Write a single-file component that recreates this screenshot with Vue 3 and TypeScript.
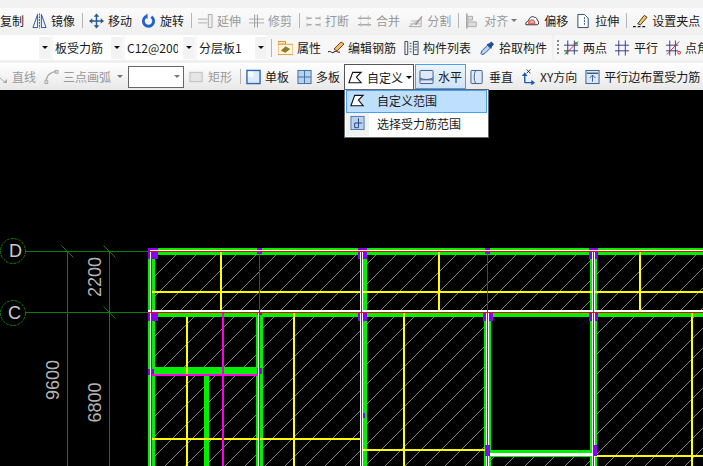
<script setup lang="ts">
interface Tool { kind?: 'sep' | 'arrow' | 'grip'; t?: string; icon?: string; w?: number; ml?: number; off?: boolean }

const icons: Record<string, string> = {
  mirror: '<path d="M1 15 6 1v14zM15 15 10 1v14z" fill="#eef3fb" stroke="#2a4f9a"/><path d="M8 0v16" stroke="#2a4f9a" stroke-dasharray="2 1"/>',
  move: '<path d="M8 1v14M1 8h14" stroke="#2b5a8c" stroke-width="1.6"/><path d="M8 0 5 3.500h6zM8 16l-3-3.500h6zM0 8l3.500-3v6zM16 8l-3.500-3v6z" fill="#2b5a8c"/>',
  rotate: '<path d="M5 3.500A5.500 5.500 0 1 0 11 3.500" fill="none" stroke="#2460c8" stroke-width="3"/><path d="M7 0v6L3.500 3z" fill="#2460c8"/>',
  extend: '<path d="M0 6h10M0 10h10" stroke="#aaa"/><path d="M11 1h4v14h-4z" fill="#eee" stroke="#aaa"/>',
  trim: '<path d="M0 6h16M0 10h16" stroke="#aaa"/><path d="M6 1v14M9 1v14" stroke="#999"/>',
  break: '<path d="M1 5h5M10 5h5M1 12h5M10 12h5" stroke="#aaa" stroke-width="1.500"/><path d="M1 3v4M15 3v4M1 10v4M15 10v4" stroke="#bbb"/>',
  merge: '<path d="M1 5h14M1 12h14" stroke="#aaa" stroke-width="1.500"/><path d="M4 2v5M12 2v5M4 9v5M12 9v5" stroke="#bbb"/>',
  split: '<path d="M1 14h13V5z" fill="#eee" stroke="#aaa"/><path d="M3 8h8M2 11h11" stroke="#bbb"/><path d="M8 12 15 3" stroke="#999" stroke-width="1.500"/>',
  align: '<path d="M2 0v16" stroke="#999" stroke-width="1.500"/><path d="M3 3h5v4H3zM3 9h9v5H3z" fill="#ddd" stroke="#aaa"/>',
  offset: '<path d="M1 12c-1-3 2-4 3-4 0-3 3-6 6-4 2 0 3 2 3 3 2 1 2 5 0 5z" fill="#fff" stroke="#223"/><path d="M4 11c-1-1 0-2 1-2 0-2 2-3 3-2 2 0 2 1 2 2 1 0 1 2 0 2z" fill="#f3a9a0" stroke="#d33"/>',
  stretch: '<path d="M2 1h7l4 4v10H2z" fill="#fff" stroke="#23457a"/><path d="M9 4v9" stroke="#23457a" stroke-dasharray="2 1"/>',
  grips: '<path d="M0 14h3M5 14h3M10 14h3" stroke="#111" stroke-width="1.500"/><path d="M5 11 12 2l3 2-7 8z" fill="#f5c862" stroke="#333"/>',
  attr: '<path d="M0 1h8v3H0z" fill="#fbe6b8" stroke="#c98a3a"/><path d="M0 4h16v11H0z" fill="#fff6df" stroke="#e69a35"/><path d="M3 11 8 6l5 3-5 4z" fill="#8c7a2e"/>',
  edit: '<path d="M0 12c3-2 3 2 6 0s3 1 6 0" fill="none" stroke="#111"/><path d="M6 9 13 2l3 2-7 7z" fill="#e9c36a" stroke="#8a3a1a"/>',
  list: '<path d="M1 1h3v14H1zM10 1h5v14h-5z" fill="#eef4fb" stroke="#345"/><path d="M6 3h2M6 6h2M6 9h2M6 12h2M11 4h3M11 7h3M11 10h3" stroke="#345"/>',
  pick: '<path d="M2 15l-1-1 1-3 6-6 3 3-6 6z" fill="#b9d6f5" stroke="#1e4f9e"/><path d="M7 4l5 5 1-3 2-2-3-3-2 2z" fill="#1e4f9e"/>',
  twopt: '<path d="M0 5h15M0 11h15M4 0v15M11 0v15" stroke="#2e3a88"/><path d="M1 15 15 1" stroke="#d62020"/><circle cx="3" cy="13" r="1.500" fill="#2d9a2d"/><circle cx="13" cy="3" r="1.500" fill="#2d9a2d"/>',
  parallel: '<path d="M0 5h15M0 11h15M4 0v16M11 0v16" stroke="#2e3a88"/>',
  angle: '<path d="M0 5h13M0 11h13M4 0v16M10 0v16" stroke="#2e3a88"/><path d="M1 15 14 1" stroke="#d62020"/><circle cx="14" cy="13" r="1.500" fill="none" stroke="#d62020"/>',
  line: '<path d="M-6 4 6 14" stroke="#aaa"/><path d="M3 14h4v-4z" fill="#aaa"/>',
  arc: '<path d="M2 15C2 8 6 3 13 2" fill="none" stroke="#aaa" stroke-width="1.500"/><rect x="1" y="12" width="3" height="3" fill="#ddd" stroke="#aaa"/><rect x="12" y="1" width="3" height="3" fill="#ddd" stroke="#aaa"/>',
  rect: '<rect x="1" y="3" width="13" height="10" fill="#e6e6e6" stroke="#bbb"/>',
  single: '<rect x="1" y="1" width="14" height="14" fill="#dce9f8" stroke="#2f66b8" stroke-width="1.500"/><path d="M2 2h6v6H2z" fill="#fff" opacity=".7"/>',
  multi: '<rect x="1" y="1" width="14" height="14" fill="#b7d0ec" stroke="#3a6ea8"/><path d="M8 1v14M1 8h14" stroke="#3a6ea8"/>',
  custom: '<path d="M1 13 5 2h9l-5 5 5 6z" fill="#fff" stroke="#111" stroke-width="1.200"/>',
  horiz: '<rect x="1" y="1" width="14" height="14" rx="1" fill="#dfe9f5" stroke="#33598c"/><path d="M1 9c3 2 11 2 14 0" fill="#fff" stroke="#33598c"/><path d="M1 11h14" stroke="#33598c"/>',
  vert: '<rect x="1" y="1" width="12" height="14" rx="1" fill="#dfe9f5" stroke="#33598c"/><path d="M6 1c-2 4-2 10 0 14" fill="#fff" stroke="#33598c"/>',
  xy: '<path d="M4 14V6M4 14h8" stroke="#1d58b0" stroke-width="1.500"/><path d="M4 3 1 7h6zM15 14l-4-3v6z" fill="#1d58b0"/><path d="M6 0l4 4M10 0 6 4" stroke="#222"/>',
  edge: '<rect x="1" y="1" width="14" height="14" fill="#dbe7f5" stroke="#33598c"/><path d="M2 4h12" stroke="#33598c" stroke-width="1.500"/><path d="M8 6v7M5 9l3-3 3 3" fill="none" stroke="#33598c"/>',
  range: '<rect x="1" y="1" width="14" height="14" fill="#bcd2ec" stroke="#4a77b0"/><path d="M9 3v10M5 8h8M5 8v5h4" fill="none" stroke="#1d3f7a"/>',
}

const row1: Tool[] = [
  { t: '复制' },
  { t: '镜像', icon: 'mirror', ml: 8 },
  { kind: 'sep' },
  { t: '移动', icon: 'move' },
  { t: '旋转', icon: 'rotate', ml: 9 },
  { kind: 'sep' },
  { t: '延伸', icon: 'extend', off: true },
  { t: '修剪', icon: 'trim', ml: 8, off: true },
  { kind: 'sep' },
  { t: '打断', icon: 'break', off: true },
  { t: '合并', icon: 'merge', ml: 8, off: true },
  { t: '分割', icon: 'split', ml: 8, off: true },
  { kind: 'sep' },
  { t: '对齐', icon: 'align', off: true },
  { kind: 'arrow' },
  { t: '偏移', icon: 'offset', ml: 8 },
  { t: '拉伸', icon: 'stretch', ml: 8 },
  { kind: 'sep' },
  { t: '设置夹点', icon: 'grips' },
]

const selects = [
  { t: '', w: 50 },
  { t: '板受力筋', w: 69 },
  { t: 'C12@200', w: 69 },
  { t: '分层板1', w: 69 },
]

const row2a: Tool[] = [
  { t: '属性', icon: 'attr' },
  { t: '编辑钢筋', icon: 'edit', w: 16, ml: 7 },
  { t: '构件列表', icon: 'list', ml: 8 },
  { t: '拾取构件', icon: 'pick', ml: 9 },
]
const row2b: Tool[] = [
  { kind: 'grip' },
  { t: '两点', icon: 'twopt', ml: 5 },
  { t: '平行', icon: 'parallel', ml: 8 },
  { t: '点角', icon: 'angle', ml: 8 },
]

const row3a: Tool[] = [
  { t: '直线', icon: 'line', w: 8, off: true },
  { t: '三点画弧', icon: 'arc', ml: 8, off: true },
  { kind: 'arrow', ml: 6 },
]
const row3b: Tool[] = [
  { t: '矩形', icon: 'rect', ml: 5, off: true },
  { kind: 'sep' },
  { t: '单板', icon: 'single' },
  { t: '多板', icon: 'multi', ml: 8 },
]
const row3c: Tool[] = [
  { t: '垂直', icon: 'vert', ml: 4 },
  { t: 'XY方向', icon: 'xy', ml: 8 },
  { t: '平行边布置受力筋', icon: 'edge', ml: 8 },
]

const toolGroups = { row1, row2a, row2b, row3a, row3b, row3c }

const rects = {
  green: [
    [148, 248, 555, 7], [148, 248, 7, 218], [148, 313, 555, 4],
    [360, 317, 7, 149], [256, 317, 7, 149], [484, 317, 7, 149], [590, 250, 7, 216],
    [360, 250, 7, 62], [155, 367, 101, 7], [204, 376, 5, 90],
    [489, 450, 103, 3], [489, 456, 103, 1],
  ],
  purple: [
    [148, 248, 10, 11], [148, 310, 10, 11], [257, 248, 5, 6], [358, 248, 9, 11], [358, 310, 9, 11],
    [485, 248, 5, 6], [589, 248, 9, 11], [483, 310, 10, 11], [589, 310, 9, 11],
    [360, 413, 5, 5], [148, 369, 6, 6], [257, 368, 5, 6], [257, 310, 5, 5],
  ],
  yellow: [
    [220, 252, 2, 59], [438, 252, 2, 59], [639, 252, 2, 59], [152, 291, 551, 2],
    [186, 317, 2, 149], [293, 313, 2, 153], [403, 313, 2, 153], [691, 313, 2, 153],
    [152, 438, 209, 2], [363, 449, 124, 2], [594, 455, 109, 2],
  ],
  magenta: [[222, 313, 2, 153], [151, 374, 108, 2]],
  white: [
    [150, 250, 553, 2], [150, 250, 2, 216], [148, 310, 555, 3],
    [360, 250, 3, 216], [258, 313, 2, 153], [486, 313, 3, 153], [592, 250, 3, 216], [489, 453, 103, 3],
  ],
  red: [
    [150, 251, 553, 1], [151, 251, 1, 215], [148, 312, 555, 1], [361, 251, 1, 215],
    [259, 252, 1, 61], [487, 252, 1, 61], [259, 313, 1, 153], [487, 313, 1, 153], [593, 251, 1, 215],
  ],
  purpleTop: [[485, 445, 5, 11], [593, 445, 4, 11]],
}

const ticks = [[67.500, 251.500], [109.500, 251.500], [109.500, 312.500]]

// 45° hatch: lines x + y = c, every 20 px, across the slab area
const hatch = Array.from({ length: 40 }, (_, i) => 411 + i * 20)
</script>

<template>
  <div class="page">
    <header class="toolbar">
      <div class="row row1">
        <template v-for="(it, i) in toolGroups.row1" :key="i">
          <span v-if="it.kind === 'sep'" class="sep"></span>
          <span v-else-if="it.kind === 'arrow'" class="arrow off-arrow"></span>
          <div v-else class="tool" :class="{ off: it.off }" :style="{ marginLeft: (it.ml ?? 0) + 'px' }">
            <svg v-if="it.icon" class="ic" viewBox="0 0 16 16" v-html="icons[it.icon]"></svg>
            <span>{{ it.t }}</span>
          </div>
        </template>
      </div>

      <div class="row row2">
        <div class="group">
          <div class="combos">
            <div v-for="s in selects" :key="s.t" class="combo" :style="{ width: s.w + 'px' }">
              <span class="combo-text">{{ s.t }}</span>
              <span class="combo-btn"><i class="arrow"></i></span>
            </div>
          </div>
          <span class="sep sep2"></span>
          <template v-for="(it, i) in toolGroups.row2a" :key="i">
            <div class="tool" :style="{ marginLeft: (it.ml ?? 0) + 'px' }">
              <svg class="ic" viewBox="0 0 16 16" :style="{ width: (it.w ?? 15) + 'px' }" v-html="icons[it.icon!]"></svg>
              <span>{{ it.t }}</span>
            </div>
          </template>
        </div>
        <div class="group group-b">
          <template v-for="(it, i) in toolGroups.row2b" :key="i">
            <span v-if="it.kind === 'grip'" class="grip"></span>
            <div v-else class="tool" :style="{ marginLeft: (it.ml ?? 0) + 'px' }">
              <svg class="ic" viewBox="0 0 16 16" v-html="icons[it.icon!]"></svg>
              <span>{{ it.t }}</span>
            </div>
          </template>
        </div>
      </div>

      <div class="row row3">
        <template v-for="(it, i) in toolGroups.row3a" :key="i">
          <span v-if="it.kind === 'arrow'" class="arrow off-arrow a3"></span>
          <div v-else class="tool off" :style="{ marginLeft: (it.ml ?? 0) + 'px' }">
            <svg class="ic" :viewBox="it.w ? '0 0 8 16' : '0 0 16 16'" :style="{ width: (it.w ?? 15) + 'px' }" v-html="icons[it.icon!]"></svg>
            <span>{{ it.t }}</span>
          </div>
        </template>
        <div class="box"><i class="arrow off-arrow"></i></div>
        <template v-for="(it, i) in toolGroups.row3b" :key="i">
          <span v-if="it.kind === 'sep'" class="sep sep3"></span>
          <div v-else class="tool" :class="{ off: it.off }" :style="{ marginLeft: (it.ml ?? 0) + 'px' }">
            <svg class="ic" viewBox="0 0 16 16" v-html="icons[it.icon!]"></svg>
            <span>{{ it.t }}</span>
          </div>
        </template>
        <div class="drop">
          <svg class="ic" viewBox="0 0 16 16" v-html="icons.custom"></svg>
          <span>自定义</span>
          <i class="arrow"></i>
          <div class="menu">
            <div class="menu-item active">
              <svg class="ic" viewBox="0 0 16 16" v-html="icons.custom"></svg>
              <span>自定义范围</span>
            </div>
            <div class="menu-item">
              <svg class="ic" viewBox="0 0 16 16" v-html="icons.range"></svg>
              <span>选择受力筋范围</span>
            </div>
          </div>
        </div>
        <div class="tool hot">
          <svg class="ic" viewBox="0 0 16 16" v-html="icons.horiz"></svg>
          <span>水平</span>
        </div>
        <div v-for="(it, i) in toolGroups.row3c" :key="i" class="tool" :style="{ marginLeft: (it.ml ?? 0) + 'px' }">
          <svg class="ic" viewBox="0 0 16 16" v-html="icons[it.icon!]"></svg>
          <span class="nowrap">{{ it.t }}</span>
        </div>
      </div>
    </header>

    <svg class="canvas" viewBox="0 90 703 376" width="703" height="376">
      <defs>
        <clipPath id="slab"><rect x="155" y="255" width="548" height="211" /></clipPath>
      </defs>
      <g clip-path="url(#slab)" stroke="#bdbdbd" stroke-width="0.7" shape-rendering="crispEdges">
        <line v-for="c in hatch" :key="c" :x1="c - 255" y1="255" :x2="c - 466" y2="466" />
      </g>
      <rect x="491" y="317" width="99" height="133" fill="#000" />

      <g fill="none" stroke="#0a7d0a" stroke-width="1" shape-rendering="crispEdges">
        <path d="M25 251.500H148M25 312.500H703M67.500 251.500V466M109.500 251.500V466" />
      </g>
      <g fill="none" stroke="#0a7d0a">
        <line v-for="(t, i) in ticks" :key="i" :x1="t[0] - 6" :y1="t[1] - 6" :x2="t[0] + 6" :y2="t[1] + 6" />
        <circle cx="13" cy="251" r="12.500" stroke-dasharray="3 1" />
        <circle cx="13" cy="313" r="12.500" stroke-dasharray="3 1" />
      </g>

      <g shape-rendering="crispEdges">
        <rect v-for="(r, i) in rects.green" :key="'g' + i" :x="r[0]" :y="r[1]" :width="r[2]" :height="r[3]" fill="#00f000" />
        <rect v-for="(r, i) in rects.purple" :key="'p' + i" :x="r[0]" :y="r[1]" :width="r[2]" :height="r[3]" fill="#8a00f0" />
        <rect v-for="(r, i) in rects.yellow" :key="'y' + i" :x="r[0]" :y="r[1]" :width="r[2]" :height="r[3]" fill="#ffff00" />
        <rect v-for="(r, i) in rects.magenta" :key="'m' + i" :x="r[0]" :y="r[1]" :width="r[2]" :height="r[3]" fill="#ff00e6" />
        <rect v-for="(r, i) in rects.white" :key="'w' + i" :x="r[0]" :y="r[1]" :width="r[2]" :height="r[3]" fill="#fff" />
        <rect v-for="(r, i) in rects.red" :key="'r' + i" :x="r[0]" :y="r[1]" :width="r[2]" :height="r[3]" fill="#f00000" />
        <rect v-for="(r, i) in rects.purpleTop" :key="'t' + i" :x="r[0]" :y="r[1]" :width="r[2]" :height="r[3]" fill="#8a00f0" />
      </g>

      <g class="dim">
        <text x="15.500" y="257" text-anchor="middle" class="axis">D</text>
        <text x="14.500" y="319" text-anchor="middle" class="axis">C</text>
        <text transform="translate(101 277) rotate(-90)" text-anchor="middle">2200</text>
        <text transform="translate(101 402.500) rotate(-90)" text-anchor="middle">6800</text>
        <text transform="translate(59 380) rotate(-90)" text-anchor="middle">9600</text>
      </g>
    </svg>
  </div>
</template>

<style>
html, body { margin: 0; background: #000; overflow: hidden; }
</style>

<style scoped>
.page {
  width: 703px;
  height: 466px;
  overflow: hidden;
  background: #000;
  font-family: "Noto Sans CJK SC", "Open Sans", sans-serif;
  font-size: 12px;
  color: #1a1a1a;
}
.toolbar {
  height: 90px;
  padding-top: 8px;
  box-sizing: border-box;
  background: #f2f2f2;
  position: relative;
  z-index: 2;
}
.row { display: flex; align-items: center; white-space: nowrap; width: 703px; overflow: visible; }
.row1 { height: 27px; padding-bottom: 2px; box-sizing: border-box; background: linear-gradient(#fbfbfb, #efefef); overflow: hidden; }
.row2 { height: 28px; background: #f0f0f0; align-items: stretch; gap: 2px; }
.row3 { height: 27px; background: linear-gradient(#fff, #e8e8e8); }
.group { display: flex; align-items: center; background: #f7f7f7; width: 552px; flex: none; height: 25px; border-radius: 0 3px 3px 0; }
.group-b { flex: 1; width: auto; border-radius: 3px 0 0 3px; overflow: hidden; }
.combos { display: flex; gap: 3px; height: 25px; }
.combo { display: flex; align-items: center; background: #fff; height: 25px; overflow: hidden; }
.combo-text { flex: 1; padding-left: 2px; overflow: hidden; min-width: 0; margin-right: 5px; }
.combo-btn { width: 11px; height: 22px; background: #f3f3f3; display: flex; align-items: center; justify-content: center; flex: none; }
.tool { display: flex; align-items: center; gap: 4px; flex: none; }
.tool.off { color: #999; }
.ic { width: 15px; height: 16px; flex: none; overflow: hidden; }
.nowrap { white-space: nowrap; }
.sep { width: 1px; height: 15px; background: #b5b5b5; margin: 0 6px 0 7px; flex: none; }
.sep2 { margin: 0 6px 0 5px; height: 18px; }
.sep3 { margin: 0 5px 0 8px; }
.grip { width: 2px; height: 16px; margin-left: 3px; flex: none; background: repeating-linear-gradient(#888 0 2px, transparent 2px 4px); }
.arrow { width: 0; height: 0; border: 3px solid transparent; border-top: 3px solid #111; border-bottom: 0; flex: none; display: inline-block; }
.off-arrow { border-top-color: #777; margin-left: 3px; }
.a3 { margin-left: 6px; }
.box {
  width: 56px; height: 22px; box-sizing: border-box; margin-left: 5px; flex: none;
  background: #fff; border: 1px solid #666; display: flex; align-items: center; justify-content: flex-end; padding-right: 3px;
}
.drop {
  position: relative; width: 70px; height: 26px; box-sizing: border-box; margin: 1px 0 0 4px; flex: none;
  background: #fff; border: 1px solid #555; border-bottom: 0; display: flex; align-items: center; gap: 4px; padding-left: 3px;
}
.drop .arrow { margin-left: -1px; }
.hot {
  width: 51px; height: 25px; box-sizing: border-box; margin-left: 1px; padding-left: 3px;
  background: linear-gradient(#edf5fd, #cfe2f6); border: 1px solid #4b9ff2;
}
.menu {
  position: absolute; left: -1px; top: 24px; width: 145px; height: 49px; box-sizing: border-box;
  background: #fff; border: 1px solid #666; padding: 0 1px; display: flex; flex-direction: column;
}
.menu-item { display: flex; align-items: center; height: 23px; box-sizing: border-box; padding: 0 0 3px 4px; gap: 12px; background: linear-gradient(90deg, #f1f1f1 0 23px, #fff 23px); flex: none; }
.menu-item.active { background: #bfdfff; border: 1px solid #4b9ff2; padding: 0 0 2px 3px; }
.canvas { display: block; background: #000; }
.dim text { fill: #b5b5b5; font-family: "Liberation Sans", sans-serif; font-size: 18px; }
.dim .axis { font-size: 18px; fill: #ccc; }
</style>
